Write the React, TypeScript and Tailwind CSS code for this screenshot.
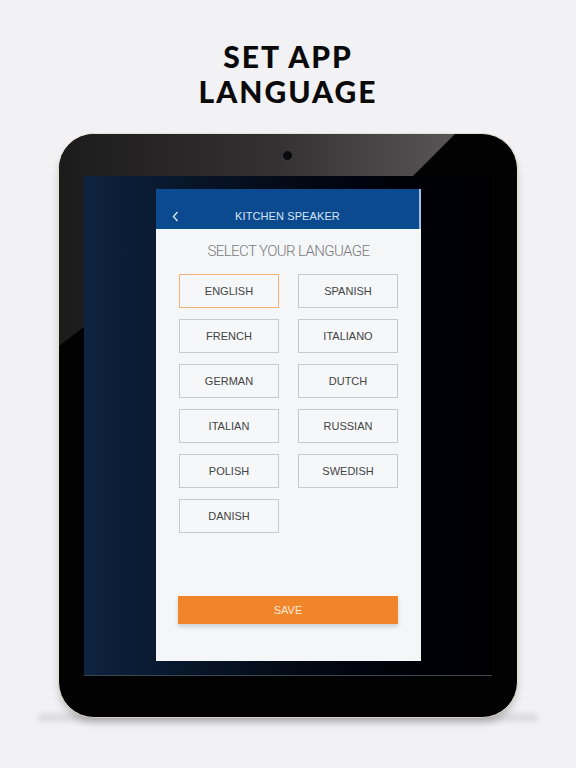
import React, { useState } from 'react';

const languages = [
  'ENGLISH', 'SPANISH',
  'FRENCH', 'ITALIANO',
  'GERMAN', 'DUTCH',
  'ITALIAN', 'RUSSIAN',
  'POLISH', 'SWEDISH',
  'DANISH',
];

const App: React.FC = () => {
  const [selected, setSelected] = useState('ENGLISH');

  return (
    <div className="w-[576px] h-[768px] bg-[#f2f1f3] flex flex-col items-center overflow-hidden">
      <h1 className="mt-[39px] text-center text-[30px] leading-[35px] font-black text-[#0a0a0a] tracking-[2px] font-['Lato','Noto_Sans',sans-serif]">
        SET APP
        <br />
        LANGUAGE
      </h1>

      {/* Tablet */}
      <div className="relative mt-[24px] w-[460px] h-[585px] rounded-[36px] bg-[#020203] border-[1.5px] border-[#e6e2cf] shadow-[0_6px_8px_-2px_rgba(0,0,0,0.25)] overflow-hidden pt-[42px] px-[25px]">
        {/* bezel glare */}
        <svg className="absolute left-0 top-0" width="460" height="240" viewBox="0 0 460 240">
          <defs>
            <linearGradient id="glare" x1="0" y1="0" x2="1" y2="0">
              <stop offset="0" stopColor="#1c1b1c" />
              <stop offset="0.55" stopColor="#333132" />
              <stop offset="1" stopColor="#575556" />
            </linearGradient>
          </defs>
          <polygon points="0,0 396,0 353,43 26,43 26,192 0,212" fill="url(#glare)" />
        </svg>
        {/* camera */}
        <div className="absolute left-[223px] top-[16px] w-[11px] h-[11px] rounded-full bg-[#0a0a0c] border border-[#3c3c40]" />

        {/* Screen */}
        <div className="relative h-[500px] bg-gradient-to-r from-[#0d2340] via-[#040a16] to-[#000003] border-b border-[#3c4650] pt-[13px] pl-[72px]">
          <div className="w-[265px] h-[472px] bg-[#f5f6f8] flex flex-col font-['Liberation_Sans',Arial,sans-serif]">
            {/* header */}
            <div className="relative h-[40px] bg-[#0b4a8e] flex items-center justify-center border-r-2 border-[#9fc1e6]">
              <svg className="absolute left-[16px] top-[22px]" width="7" height="11" viewBox="0 0 7 11">
                <path d="M5.5 1 L1.5 5.5 L5.5 10" fill="none" stroke="#d6e4f5" strokeWidth="1.4" />
              </svg>
              <span className="mt-[14px] text-[11px] text-[#d6e4f5] tracking-[0.1px]">KITCHEN SPEAKER</span>
            </div>

            {/* body */}
            <div className="flex-1 flex flex-col px-[23px]">
              <p className="mt-[13px] text-center text-[15px] leading-[18px] font-light text-[#7a7a7c] tracking-[-0.6px] font-['Roboto',sans-serif]">
                SELECT YOUR LANGUAGE
              </p>
              <div className="mt-[14px] grid grid-cols-2 gap-x-[19px] gap-y-[11px]">
                {languages.map(lang => (
                  <button
                    key={lang}
                    onClick={() => setSelected(lang)}
                    className={`h-[34px] bg-[#f6f7f9] text-[11px] text-[#444] border-[1.5px] ${
                      selected === lang ? 'border-[#f2b27a]' : 'border-[#c9c9cb]'
                    }`}
                  >
                    {lang}
                  </button>
                ))}
              </div>
              <button className="mt-[63px] -ml-[1px] w-[220px] h-[28px] bg-[#f0852a] text-[11px] text-[#fde8d6] shadow-[0_3px_4px_rgba(0,0,0,0.15)]">
                SAVE
              </button>
            </div>
          </div>
        </div>
      </div>
      {/* floor shadow */}
      <div className="-mt-[3px] w-[500px] h-[5px] rounded-full bg-[#000000]/15 blur-[3px]" />
    </div>
  );
};

export default App;
